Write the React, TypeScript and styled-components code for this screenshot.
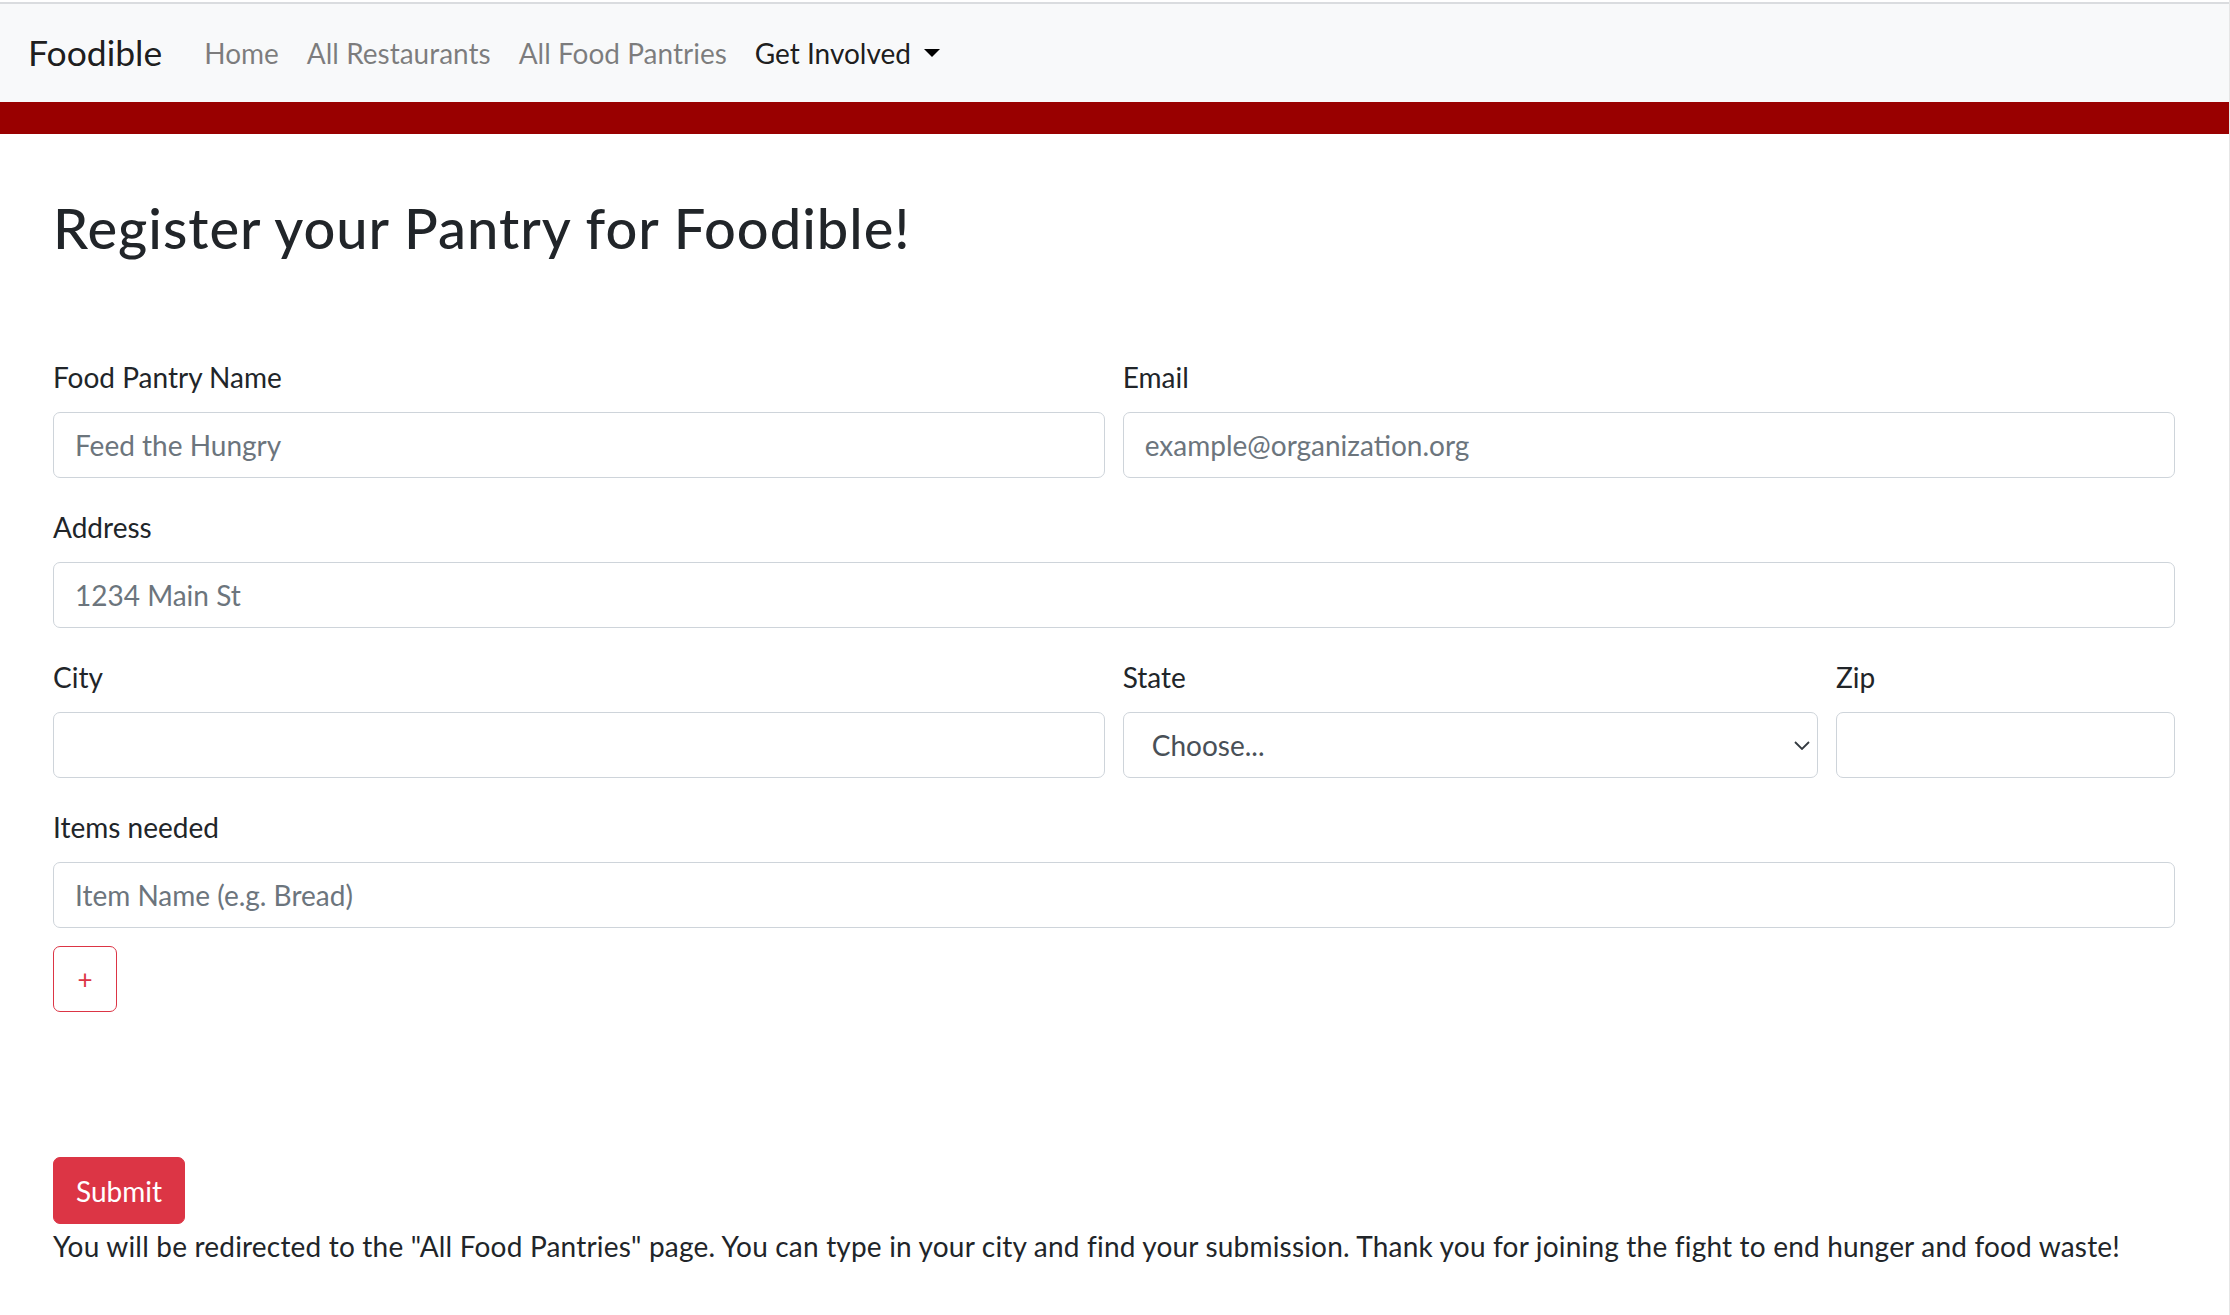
import React from "react";
import styled, { createGlobalStyle } from "styled-components";

const GlobalStyle = createGlobalStyle`
  html, body {
    margin: 0;
    padding: 0;
    background: #ffffff;
  }
  body {
    font-family: Lato, "Open Sans", "Noto Sans", sans-serif;
    font-size: 28px;
    line-height: 1.5;
    color: #212529;
  }
  * { box-sizing: border-box; }
`;

const Page = styled.div`
  padding-top: 2px;
  border-right: 1px solid #e6e6e6;
  min-height: 1315px;
`;

const NavBar = styled.nav`
  display: flex;
  align-items: center;
  height: 100px;
  padding: 0 28px;
  background: #f8f9fa;
  border-top: 2px solid #dadcdf;
`;

const Brand = styled.a`
  font-size: 35.5px;
  line-height: 1.5;
  color: rgba(0, 0, 0, 0.9);
  text-decoration: none;
  margin-right: 28px;
`;

const NavList = styled.div`
  display: flex;
  align-items: center;
`;

const NavLink = styled.a<{ $active?: boolean }>`
  display: flex;
  align-items: center;
  padding: 0 14px;
  font-size: 28px;
  color: ${(p) => (p.$active ? "rgba(0, 0, 0, 0.9)" : "rgba(0, 0, 0, 0.5)")};
  text-decoration: none;
`;

const Caret = styled.span`
  display: inline-block;
  margin-left: 13px;
  width: 0;
  height: 0;
  border-top: 8px solid #000;
  border-left: 8px solid transparent;
  border-right: 8px solid transparent;
`;

const RedBar = styled.div`
  height: 32px;
  background: #990000;
`;

const Main = styled.main`
  padding: 0 54px 0 53px;
`;

const Heading = styled.h1`
  margin: 60px 0 95px;
  font-size: 56px;
  line-height: 67px;
  font-weight: 500;
  letter-spacing: 1px;
  color: #212529;
`;

const Row = styled.div`
  display: flex;
  margin: 0 -8.75px;
`;

const Col = styled.div<{ $span: number }>`
  flex: 0 0 ${(p) => (p.$span / 12) * 100}%;
  max-width: ${(p) => (p.$span / 12) * 100}%;
  padding: 0 8.75px;
`;

const Group = styled.div`
  margin-bottom: 28px;
`;

const Label = styled.label`
  display: block;
  line-height: 42px;
  margin-bottom: 14px;
  font-size: 28px;
`;

const Input = styled.input`
  display: block;
  width: 100%;
  height: 66px;
  padding: 0 21px;
  font-family: inherit;
  font-size: 28px;
  color: #495057;
  background: #fff;
  border: 1px solid #ced4da;
  border-radius: 7px;
  outline: none;
  &::placeholder {
    color: #6c757d;
    opacity: 1;
  }
`;

const Select = styled.select`
  display: block;
  width: 100%;
  height: 66px;
  padding: 0 40px 0 28px;
  font-family: inherit;
  font-size: 28px;
  color: #495057;
  background-color: #fff;
  background-image: url("data:image/svg+xml,%3Csvg xmlns='http://www.w3.org/2000/svg' width='16' height='9' viewBox='0 0 16 9'%3E%3Cpolyline points='1,1 8,8 15,1' fill='none' stroke='%23343a40' stroke-width='1.8'/%3E%3C/svg%3E");
  background-repeat: no-repeat;
  background-position: right 7px center;
  background-size: 16px 9px;
  border: 1px solid #ced4da;
  border-radius: 7px;
  appearance: none;
  -webkit-appearance: none;
  outline: none;
`;

const ItemsGroup = styled.div`
  display: flex;
  flex-direction: column;
  align-items: flex-start;
`;

const ItemInput = styled(Input)`
  margin-bottom: 18px;
`;

const AddButton = styled.button`
  width: 64px;
  height: 66px;
  padding: 0;
  font-family: inherit;
  font-size: 26px;
  line-height: 1;
  color: #dc3545;
  background: transparent;
  border: 1px solid #dc3545;
  border-radius: 7px;
  cursor: pointer;
`;

const Footer = styled.div`
  margin-top: 145px;
  display: flex;
  flex-direction: column;
  align-items: flex-start;
`;

const SubmitButton = styled.button`
  height: 67px;
  padding: 0 22px;
  font-family: inherit;
  font-size: 28px;
  color: #fff;
  background: #dc3545;
  border: 1px solid #dc3545;
  border-radius: 7px;
  cursor: pointer;
`;

const Note = styled.p`
  margin: 1px 0 0;
  line-height: 42px;
  font-size: 28px;
  letter-spacing: 0.19px;
  color: #212529;
`;

export default function App() {
  return (
    <Page>
      <GlobalStyle />
      <NavBar>
        <Brand href="#">Foodible</Brand>
        <NavList>
          <NavLink href="#">Home</NavLink>
          <NavLink href="#">All Restaurants</NavLink>
          <NavLink href="#">All Food Pantries</NavLink>
          <NavLink href="#" $active>
            Get Involved
            <Caret />
          </NavLink>
        </NavList>
      </NavBar>
      <RedBar />
      <Main>
        <Heading>Register your Pantry for Foodible!</Heading>
        <form onSubmit={(e) => e.preventDefault()}>
          <Row>
            <Col $span={6}>
              <Group>
                <Label>Food Pantry Name</Label>
                <Input placeholder="Feed the Hungry" />
              </Group>
            </Col>
            <Col $span={6}>
              <Group>
                <Label>Email</Label>
                <Input placeholder="example@organization.org" />
              </Group>
            </Col>
          </Row>
          <Group>
            <Label>Address</Label>
            <Input placeholder="1234 Main St" />
          </Group>
          <Row>
            <Col $span={6}>
              <Group>
                <Label>City</Label>
                <Input />
              </Group>
            </Col>
            <Col $span={4}>
              <Group>
                <Label>State</Label>
                <Select defaultValue="">
                  <option value="">Choose...</option>
                </Select>
              </Group>
            </Col>
            <Col $span={2}>
              <Group>
                <Label>Zip</Label>
                <Input />
              </Group>
            </Col>
          </Row>
          <ItemsGroup>
            <Label>Items needed</Label>
            <ItemInput placeholder="Item Name (e.g. Bread)" />
            <AddButton type="button">+</AddButton>
          </ItemsGroup>
          <Footer>
            <SubmitButton type="submit">Submit</SubmitButton>
            <Note>
              You will be redirected to the "All Food Pantries" page. You can type in your city and
              find your submission. Thank you for joining the fight to end hunger and food waste!
            </Note>
          </Footer>
        </form>
      </Main>
    </Page>
  );
}
